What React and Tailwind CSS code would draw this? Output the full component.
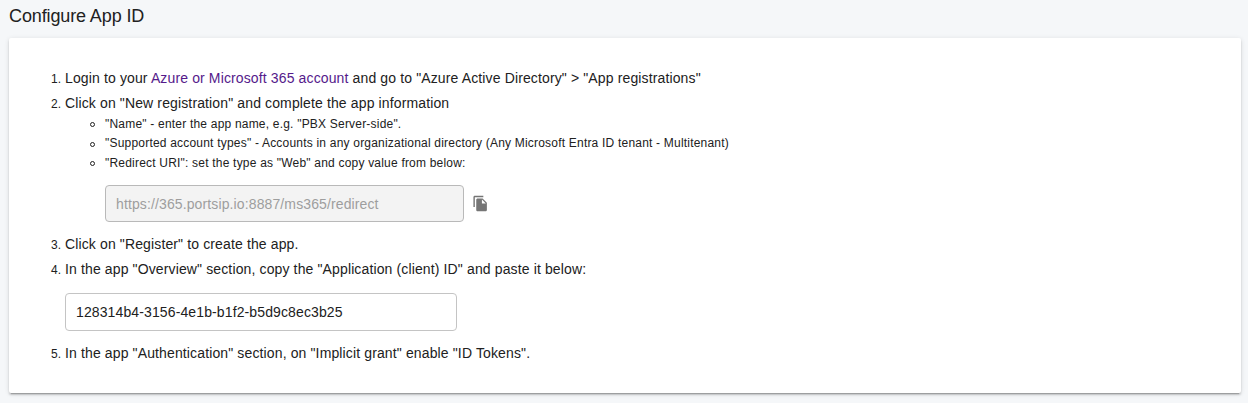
function Step({ n, children }) {
  return (
    <li className="flex h-[25px] items-center">
      <span className="w-[14px] shrink-0 pt-px text-[12px] tracking-[0.15px]">{n}.</span>
      <span className="whitespace-pre">{children}</span>
    </li>
  );
}

function Detail({ children }) {
  return (
    <li className="flex h-[19.5px] items-center text-[12px] tracking-[0.203px]">
      <span className="mr-[10px] mt-[2px] h-[5px] w-[5px] shrink-0 rounded-full border border-[#212121]" />
      <span className="whitespace-pre">{children}</span>
    </li>
  );
}

export default function App() {
  return (
    <main className="h-[403px] overflow-hidden bg-[#f5f7f9] pl-[9px] pr-[7px] font-['Liberation_Sans',Arial,sans-serif] text-[14px] text-[#212121]">
      <h1 className="flex h-[38px] items-center pb-[6px] text-[18px] tracking-[-0.12px]">Configure App ID</h1>
      <section className="h-[355px] rounded-[2px] bg-white pl-[42px] pt-[28px] shadow-[0px_3px_1px_-2px_rgba(0,0,0,0.2),0px_2px_2px_0px_rgba(0,0,0,0.14),0px_1px_5px_0px_rgba(0,0,0,0.12)]">
        <ol className="tracking-[0.13px]">
          <Step n={1}>
            Login to your <a href="#" className="text-[#551a8b]">Azure or Microsoft 365 account</a> and go to "Azure Active Directory" &gt; "App registrations"
          </Step>
          <Step n={2}>Click on "New registration" and complete the app information</Step>
          <li className="pl-[39px] -mt-[2px]">
            <ul>
              <Detail>"Name" - enter the app name, e.g. "PBX Server-side".</Detail>
              <Detail>"Supported account types" - Accounts in any organizational directory (Any Microsoft Entra ID tenant - Multitenant)</Detail>
              <Detail>"Redirect URI": set the type as "Web" and copy value from below:</Detail>
            </ul>
          </li>
          <li className="mt-[12.5px] flex items-center pl-[54px]">
            <input
              disabled
              value="https://365.portsip.io:8887/ms365/redirect"
              className="h-[37px] w-[359px] rounded-[4px] border border-[#b9b9b9] bg-[#f3f3f3] px-[10px] tracking-[0.12px] text-[#9e9e9e]"
            />
            <button aria-label="Copy" className="ml-[8px]">
              <svg viewBox="0 0 24 24" className="h-[17px] w-[17px] fill-[#757575]">
                <path d="M16 1H4c-1.1 0-2 .9-2 2v14h2V3h12V1zm-1 4l6 6v10c0 1.1-.9 2-2 2H7.99C6.89 23 6 22.1 6 21l.01-14c0-1.1.89-2 1.99-2h7zm-1 7h5.5L14 6.5V12z" />
              </svg>
            </button>
          </li>
          <li className="h-[10px]" />
          <Step n={3}>Click on "Register" to create the app.</Step>
          <Step n={4}>In the app "Overview" section, copy the "Application (client) ID" and paste it below:</Step>
          <li className="mt-[11px] pl-[14px]">
            <input
              defaultValue="128314b4-3156-4e1b-b1f2-b5d9c8ec3b25"
              className="block h-[38px] w-[392px] rounded-[4px] border border-[#c4c4c4] bg-white px-[10px] tracking-[0.12px]"
            />
          </li>
          <li className="h-[10px]" />
          <Step n={5}>In the app "Authentication" section, on "Implicit grant" enable "ID Tokens".</Step>
        </ol>
      </section>
    </main>
  );
}
